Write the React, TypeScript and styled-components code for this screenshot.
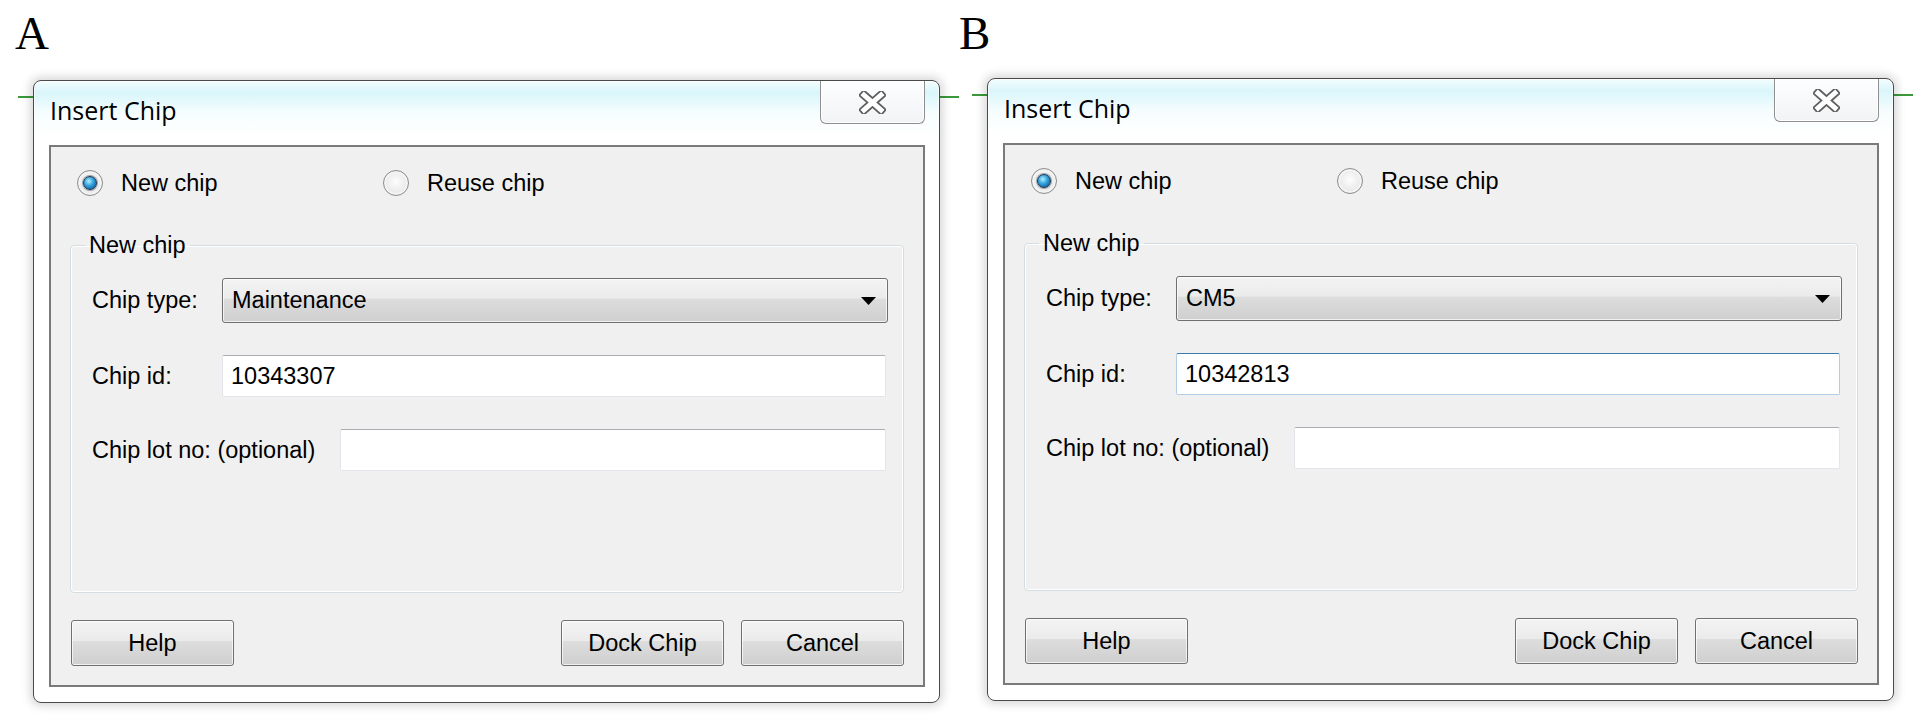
import React from "react";
import styled, { createGlobalStyle } from "styled-components";

const GlobalStyle = createGlobalStyle`
  html {
    background: #ffffff;
  }
  html, body {
    margin: 0;
    padding: 0;
  }
  body {
    font-family: "Liberation Sans", Arial, sans-serif;
    color: #000;
  }
`;

const Page = styled.div`
  display: flex;
  width: 1920px;
  height: 716px;
  padding-left: 15px;
  box-sizing: border-box;
  overflow: hidden;
`;

const Panel = styled.section<{ $width: number }>`
  display: flex;
  flex-direction: column;
  align-items: flex-start;
  width: ${(p) => p.$width}px;
  flex-shrink: 0;
`;

const PanelLabel = styled.div`
  font-family: "Liberation Serif", "Times New Roman", serif;
  font-size: 47px;
  line-height: 47px;
  margin-top: 10px;
`;

const Window = styled.div<{ $indent: number; $drop: number }>`
  position: relative;
  width: 907px;
  height: 623px;
  box-sizing: border-box;
  margin-top: ${(p) => p.$drop}px;
  margin-left: ${(p) => p.$indent}px;
  padding: 0 14px 15px 15px;
  display: flex;
  flex-direction: column;
  border: 1px solid #4a4a4a;
  border-radius: 8px;
  background: linear-gradient(
    to bottom,
    #f3fcfe 0px,
    #d9f6fb 12px,
    #f6fdfe 32px,
    #ffffff 56px
  );
  box-shadow: inset 0 0 0 1px rgba(255, 255, 255, 0.7),
    0 0 10px 3px rgba(0, 0, 0, 0.16);

  /* the green guide line of the app behind the dialog */
  &::before {
    content: "";
    position: absolute;
    top: 15px;
    left: -16px;
    right: -20px;
    height: 2px;
    background: #3a9a3a;
    z-index: -1;
  }
`;

const TitleBar = styled.div`
  height: 64px;
  display: flex;
  justify-content: space-between;
  align-items: flex-start;
  flex-shrink: 0;
`;

const Title = styled.div`
  font-family: "Open Sans", "Noto Sans", sans-serif;
  font-size: 25px;
  line-height: 34px;
  margin-top: 12px;
  padding-left: 1px;
`;

const CloseButton = styled.div`
  width: 105px;
  height: 43px;
  box-sizing: border-box;
  border: 1px solid #8f8f8f;
  border-top: none;
  border-radius: 0 0 6px 6px;
  background: linear-gradient(to bottom, #fcfeff, #f1f3f4);
  box-shadow: inset 0 0 0 1px #ffffff;
  display: flex;
  align-items: center;
  justify-content: center;
`;

const Client = styled.div`
  flex: 1;
  display: flex;
  flex-direction: column;
  box-sizing: border-box;
  border: 2px solid #7a7a7a;
  background: #f0f0f0;
  padding: 23px 19px 19px 19px;
`;

const RadioRow = styled.div`
  display: flex;
  height: 26px;
  padding-left: 7px;
`;

const RadioOption = styled.label<{ $width?: number }>`
  display: flex;
  align-items: center;
  gap: 18px;
  font-size: 23.5px;
  width: ${(p) => (p.$width ? `${p.$width}px` : "auto")};
`;

const RadioCircle = styled.span`
  width: 26px;
  height: 26px;
  box-sizing: border-box;
  border-radius: 50%;
  border: 1px solid #8c8c8c;
  background: radial-gradient(
    circle at 50% 45%,
    #fdfdfd 0%,
    #ececec 55%,
    #cdcdcd 100%
  );
  box-shadow: inset 0 0 0 2px #f4f4f4;
  display: flex;
  align-items: center;
  justify-content: center;
  flex-shrink: 0;
`;

const RadioDot = styled.span`
  width: 14px;
  height: 14px;
  box-sizing: border-box;
  border-radius: 50%;
  border: 1px solid #1c3550;
  background: radial-gradient(
    circle at 40% 35%,
    #b2f0ff 0%,
    #2f9fdc 45%,
    #0c4a80 100%
  );
  box-shadow: 0 0 0 1px #9aa4ad;
`;

const GroupBox = styled.fieldset`
  flex: 1;
  min-width: 0;
  margin: 37px 0 0 0;
  padding: 21px 15px 0 21px;
  border: 1px solid #d3dde4;
  border-radius: 4px;
  box-shadow: inset 0 0 0 1px #ffffff;
`;

const GroupLegend = styled.legend`
  font-size: 23.5px;
  line-height: 24px;
  padding: 0 4px;
  margin-left: -7px;
`;

const FieldRow = styled.div`
  display: flex;
  align-items: center;

  & + & {
    margin-top: 32px;
  }
`;

const FieldLabel = styled.span<{ $width: number }>`
  width: ${(p) => p.$width}px;
  flex-shrink: 0;
  font-size: 23.5px;
`;

const Combo = styled.div`
  flex: 1;
  height: 45px;
  box-sizing: border-box;
  display: flex;
  align-items: center;
  justify-content: space-between;
  padding: 0 11px 0 9px;
  border: 1px solid #6f6f6f;
  border-radius: 3px;
  background: linear-gradient(
    to bottom,
    #f3f3f3 0%,
    #ebebeb 45%,
    #dddddd 46%,
    #cfcfcf 100%
  );
  box-shadow: inset 0 0 0 1px rgba(255, 255, 255, 0.7);
  font-size: 23.5px;
`;

const TextBox = styled.div<{ $focused?: boolean }>`
  flex: 1;
  height: 42px;
  margin-right: 2px;
  box-sizing: border-box;
  display: flex;
  align-items: center;
  padding: 0 8px;
  background: #ffffff;
  border: 1px solid ${(p) => (p.$focused ? "#b4cde6" : "#e2e5ea")};
  border-top-color: ${(p) => (p.$focused ? "#3d7bad" : "#abadb3")};
  border-radius: 2px;
  font-size: 23.5px;
`;

const ButtonRow = styled.div`
  display: flex;
  justify-content: space-between;
  margin-top: 27px;
  height: 46px;
  padding-left: 1px;
`;

const ButtonGroup = styled.div`
  display: flex;
  gap: 17px;
`;

const Button = styled.button`
  width: 163px;
  height: 46px;
  box-sizing: border-box;
  padding: 0;
  border: 1px solid #707070;
  border-radius: 3px;
  background: linear-gradient(
    to bottom,
    #f3f3f3 0%,
    #ebebeb 45%,
    #dddddd 46%,
    #cfcfcf 100%
  );
  box-shadow: inset 0 0 0 1px rgba(255, 255, 255, 0.7);
  font-family: "Liberation Sans", Arial, sans-serif;
  font-size: 23.5px;
  color: #000;
`;

function CloseGlyph() {
  return (
    <svg width="27" height="23" viewBox="0 0 27 23">
      <g strokeLinecap="square">
        <line x1="5" y1="4" x2="22" y2="19" stroke="#5e5e5e" strokeWidth="8.5" />
        <line x1="22" y1="4" x2="5" y2="19" stroke="#5e5e5e" strokeWidth="8.5" />
        <line x1="5" y1="4" x2="22" y2="19" stroke="#ffffff" strokeWidth="5" />
        <line x1="22" y1="4" x2="5" y2="19" stroke="#ffffff" strokeWidth="5" />
      </g>
    </svg>
  );
}

function ComboArrow() {
  return (
    <svg width="15" height="8" viewBox="0 0 15 8">
      <path d="M0 0 H15 L7.5 8 Z" fill="#000" />
    </svg>
  );
}

type DialogProps = {
  label: string;
  width: number;
  indent: number;
  drop: number;
  chipType: string;
  chipId: string;
  idFocused?: boolean;
};

function InsertChipDialog(props: DialogProps) {
  return (
    <Panel $width={props.width}>
      <PanelLabel>{props.label}</PanelLabel>
      <Window $indent={props.indent} $drop={props.drop}>
        <TitleBar>
          <Title>Insert Chip</Title>
          <CloseButton>
            <CloseGlyph />
          </CloseButton>
        </TitleBar>
        <Client>
          <RadioRow>
            <RadioOption $width={306}>
              <RadioCircle>
                <RadioDot />
              </RadioCircle>
              New chip
            </RadioOption>
            <RadioOption>
              <RadioCircle />
              Reuse chip
            </RadioOption>
          </RadioRow>
          <GroupBox>
            <GroupLegend>New chip</GroupLegend>
            <FieldRow>
              <FieldLabel $width={130}>Chip type:</FieldLabel>
              <Combo>
                {props.chipType}
                <ComboArrow />
              </Combo>
            </FieldRow>
            <FieldRow>
              <FieldLabel $width={130}>Chip id:</FieldLabel>
              <TextBox $focused={props.idFocused}>{props.chipId}</TextBox>
            </FieldRow>
            <FieldRow>
              <FieldLabel $width={248}>Chip lot no: (optional)</FieldLabel>
              <TextBox />
            </FieldRow>
          </GroupBox>
          <ButtonRow>
            <Button>Help</Button>
            <ButtonGroup>
              <Button>Dock Chip</Button>
              <Button>Cancel</Button>
            </ButtonGroup>
          </ButtonRow>
        </Client>
      </Window>
    </Panel>
  );
}

function App() {
  return (
    <>
      <GlobalStyle />
      <Page>
        <InsertChipDialog
          label="A"
          width={944}
          indent={18}
          drop={23}
          chipType="Maintenance"
          chipId="10343307"
        />
        <InsertChipDialog
          label="B"
          width={950}
          indent={28}
          drop={21}
          chipType="CM5"
          chipId="10342813"
          idFocused
        />
      </Page>
    </>
  );
}

export default App;
